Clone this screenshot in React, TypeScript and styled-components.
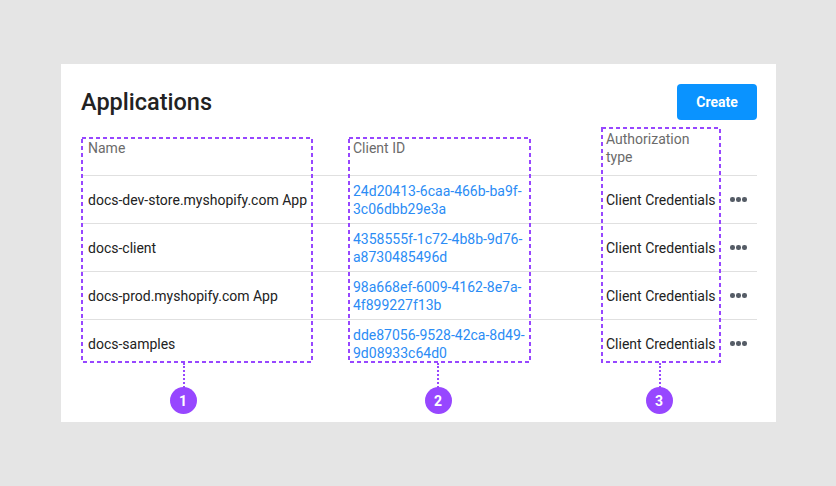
import React, { ReactElement } from 'react'
import styled, { createGlobalStyle } from 'styled-components'

interface AppRow {
    name: string;
    clientId: string;
    authType: string;
}
interface MarkerProps {
    left: number;
    top: number;
    width: number;
    height: number;
}
interface StemProps {
    at: number;
}
interface BadgeProps {
    left: number;
}

const rows: AppRow[] = [
    { name: 'docs-dev-store.myshopify.com App', clientId: '24d20413-6caa-466b-ba9f-3c06dbb29e3a', authType: 'Client Credentials' },
    { name: 'docs-client', clientId: '4358555f-1c72-4b8b-9d76-a8730485496d', authType: 'Client Credentials' },
    { name: 'docs-prod.myshopify.com App', clientId: '98a668ef-6009-4162-8e7a-4f899227f13b', authType: 'Client Credentials' },
    { name: 'docs-samples', clientId: 'dde87056-9528-42ca-8d49-9d08933c64d0', authType: 'Client Credentials' },
]

const GlobalStyle = createGlobalStyle`
    html, body {
        margin: 0;
        padding: 0;
        background: #e5e5e5;
        font-family: Roboto, "Liberation Sans", Arial, sans-serif;
    }
`
const Page = styled.div`
    width: 836px;
    height: 486px;
    padding: 64px 0 0 61px;
    box-sizing: border-box;
`
const Card = styled.div`
    position: relative;
    width: 715px;
    height: 358px;
    box-sizing: border-box;
    padding: 20px 19px 0 20px;
    background: #fff;
`
const Toolbar = styled.div`
    display: flex;
    align-items: center;
    justify-content: space-between;
    height: 36px;
`
const Title = styled.h1`
    margin: 0;
    font-size: 23.5px;
    font-weight: 500;
    color: #222;
`
const CreateButton = styled.button`
    width: 80px;
    height: 36px;
    border: none;
    border-radius: 4px;
    background: #0a93ff;
    color: #fff;
    font-family: inherit;
    font-size: 14px;
    font-weight: 700;
    cursor: pointer;
`
const Table = styled.div`
    display: grid;
    grid-template-columns: 265px 253px 124px 34px;
`
const HeadCell = styled.div`
    height: 55px;
    display: flex;
    align-items: center;
    padding-left: 7px;
    font-size: 14px;
    line-height: 18px;
    color: #6b6b6b;
`
const HeadText = styled.span`
    max-width: 96px;
`
const Cell = styled.div`
    height: 47px;
    display: flex;
    align-items: center;
    padding-left: 7px;
    border-top: 1px solid #e0e0e0;
    font-size: 14px;
    line-height: 18px;
    color: #222;
`
const IdText = styled.span`
    max-width: 178px;
    color: #2b8cf5;
`
const MoreButton = styled.div`
    display: flex;
    gap: 1.5px;
`
const Dot = styled.span`
    width: 4.5px;
    height: 4.5px;
    border-radius: 50%;
    background: #555c66;
`
const Marker = styled.div`
    position: absolute;
    left: ${(p: MarkerProps): string => p.left + 'px'};
    top: ${(p: MarkerProps): string => p.top + 'px'};
    width: ${(p: MarkerProps): string => p.width + 'px'};
    height: ${(p: MarkerProps): string => p.height + 'px'};
    pointer-events: none;
`
const Stem = styled.div`
    position: absolute;
    left: ${(p: StemProps): string => p.at - 1 + 'px'};
    top: 100%;
    height: 25px;
    border-left: 2px dotted #9747ff;
`
const Badge = styled.div`
    position: absolute;
    left: ${(p: BadgeProps): string => p.left - 13.5 + 'px'};
    top: 323px;
    width: 27px;
    height: 27px;
    border-radius: 50%;
    background: #9747ff;
    color: #fff;
    font-size: 14px;
    font-weight: 700;
    display: flex;
    align-items: center;
    justify-content: center;
`

const DashedBox = ({ left, top, width, height, stem }: MarkerProps & { stem: number }): ReactElement => (
    <Marker left={left} top={top} width={width} height={height}>
        <svg width={width} height={height} style={{ display: 'block' }}>
            <rect x={1} y={1} width={width - 2} height={height - 2} fill="none" stroke="#9747ff" strokeWidth={2} strokeDasharray="4 3" />
        </svg>
        <Stem at={stem} />
    </Marker>
)

export default function App(): ReactElement {
    return (
        <Page>
            <GlobalStyle />
            <Card>
                <Toolbar>
                    <Title>Applications</Title>
                    <CreateButton>Create</CreateButton>
                </Toolbar>
                <Table>
                    <HeadCell>Name</HeadCell>
                    <HeadCell>Client ID</HeadCell>
                    <HeadCell><HeadText>Authorization type</HeadText></HeadCell>
                    <HeadCell />
                    {rows.map((row): JSX.Element => (
                        <React.Fragment key={row.clientId}>
                            <Cell>{row.name}</Cell>
                            <Cell><IdText>{row.clientId}</IdText></Cell>
                            <Cell>{row.authType}</Cell>
                            <Cell>
                                <MoreButton><Dot /><Dot /><Dot /></MoreButton>
                            </Cell>
                        </React.Fragment>
                    ))}
                </Table>
                <DashedBox left={20} top={73} width={232} height={226} stem={103} />
                <DashedBox left={287} top={73} width={183} height={226} stem={90} />
                <DashedBox left={540} top={63} width={120} height={236} stem={59} />
                <Badge left={122}>1</Badge>
                <Badge left={377}>2</Badge>
                <Badge left={598}>3</Badge>
            </Card>
        </Page>
    )
}
